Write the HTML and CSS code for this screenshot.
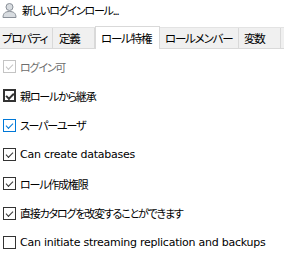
FILE: index.html
```html
<!DOCTYPE html>
<html lang="ja">
<head>
<meta charset="utf-8">
<link rel="stylesheet" href="styles.css">
</head>
<body>
<div class="title">
  <svg class="user-icon" width="15" height="16" viewBox="0 0 15 16">
    <circle cx="7.5" cy="5" r="3.5" fill="#d8dce0" stroke="#8a9098" stroke-width="1"/>
    <path d="M1 15.5 C1 11 3.5 9.5 7.5 9.5 C11.5 9.5 14 11 14 15.5 Z" fill="#d8dce0" stroke="#8a9098" stroke-width="1"/>
  </svg>
  <span class="title-text">新しいログインロール...</span>
</div>
<div class="tabs">
  <div class="tab t1">プロパティ</div>
  <div class="tab t2">定義</div>
  <div class="tab t3 active">ロール特権</div>
  <div class="tab t4">ロールメンバー</div>
  <div class="tab t5">変数</div>
  <div class="tab t6"></div>
</div>
<div class="list">
  <label class="row disabled"><span class="box checked"></span><span class="jp">ログイン可</span></label>
  <label class="row"><span class="box checked dark"></span><span class="jp">親ロールから継承</span></label>
  <label class="row"><span class="box checked blue"></span><span class="jp">スーパーユーザ</span></label>
  <label class="row"><span class="box checked"></span><span class="en">Can create databases</span></label>
  <label class="row"><span class="box checked"></span><span class="jp">ロール作成権限</span></label>
  <label class="row"><span class="box checked"></span><span class="jp">直接カタログを改変することができます</span></label>
  <label class="row"><span class="box"></span><span class="en">Can initiate streaming replication and backups</span></label>
</div>
</body>
</html>
```
FILE: styles.css
```css
html, body {
  margin: 0;
  padding: 0;
  background: #ffffff;
}
body {
  width: 284px;
  height: 259px;
  overflow: hidden;
  font-family: "Noto Sans CJK JP", sans-serif;
  color: #000;
}
.title {
  display: flex;
  align-items: center;
  height: 17px;
  padding: 1px 0 0 2px;
  gap: 5px;
}
.title-text {
  font-size: 11px;
  letter-spacing: -1.2px;
  font-feature-settings: "palt";
  color: #000;
}
.tabs {
  margin-top: 9px;
  display: flex;
  height: 22px;
  background: #f0f0f0;
  border-top: 1px solid #e3e3e3;
  border-bottom: 1px solid #d9d9d9;
  box-sizing: border-box;
}
.tab {
  font-size: 11.5px;
  letter-spacing: -1.2px;
  font-feature-settings: "palt";
  line-height: 20px;
  border-right: 1px solid #d9d9d9;
  white-space: nowrap;
  overflow: hidden;
  box-sizing: border-box;
  flex: none;
}
.t1 { width: 53px; padding-left: 2px; }
.t2 { width: 42px; padding-left: 6px; }
.t3 { width: 65px; }
.t4 { width: 79px; padding-left: 5px; }
.t5 { width: 42px; padding-left: 5px; }
.t6 { flex: 1; border-right: none; }
.tab.active {
  background: #fff;
  border: 1px solid #d9d9d9;
  border-bottom: none;
  margin-top: -2px;
  height: 23px;
  line-height: 22px;
  padding-left: 5px;
}
.list {
  display: flex;
  flex-direction: column;
  padding: 11px 0 0 3px;
  gap: 16.33px;
}
.row {
  display: flex;
  align-items: center;
  height: 13px;
  gap: 4px;
  font-size: 11px;
}
.jp {
  letter-spacing: -1.2px;
  font-feature-settings: "palt";
}
.en {
  font-family: "DejaVu Sans", sans-serif;
  font-size: 11px;
  letter-spacing: -0.25px;
  color: #000;
}
.row.disabled .jp { color: #6d6d6d; }
.box {
  width: 13px;
  height: 13px;
  box-sizing: border-box;
  border: 1px solid #333;
  position: relative;
  flex: none;
}
.box.checked::after {
  content: "";
  position: absolute;
  left: 3px;
  top: 1px;
  width: 6px;
  height: 3px;
  border-left: 1px solid #333;
  border-bottom: 1px solid #333;
  transform: translate(-1px, 2px) rotate(-45deg);
}
.box.dark { border: 2px solid #333; }
.box.dark::after { left: 2px; top: 0; border-width: 2px; }
.box.blue { border-color: #0078d7; }
.box.blue::after { border-color: #0078d7; }
.row.disabled .box { border-color: #c4c4c4; }
.row.disabled .box::after { border-color: #c4c4c4; }
```
